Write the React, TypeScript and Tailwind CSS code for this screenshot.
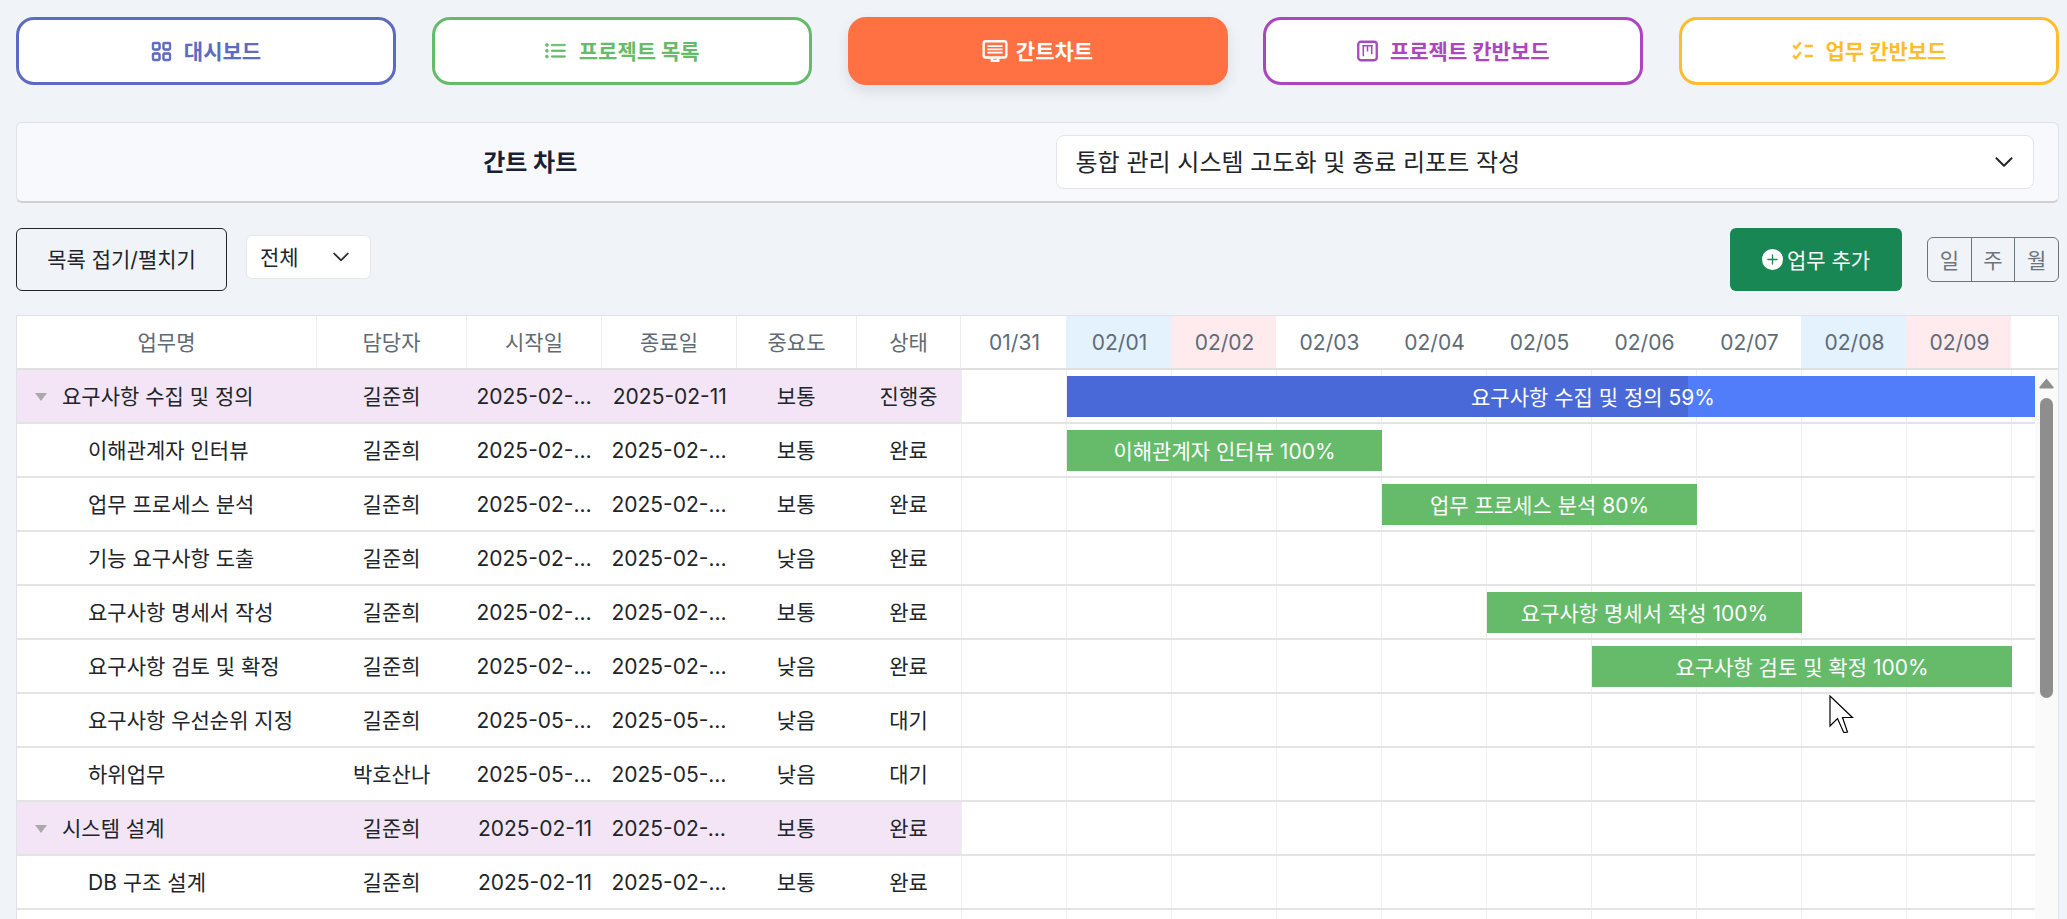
import { BsGrid, BsListUl, BsPlusCircleFill, BsChevronDown } from "react-icons/bs";
import type { ReactNode } from "react";

const DAYS = [
  { label: "01/31", bg: "" },
  { label: "02/01", bg: "bg-[#e3f2fd]" },
  { label: "02/02", bg: "bg-[#ffebee]" },
  { label: "02/03", bg: "" },
  { label: "02/04", bg: "" },
  { label: "02/05", bg: "" },
  { label: "02/06", bg: "" },
  { label: "02/07", bg: "" },
  { label: "02/08", bg: "bg-[#e3f2fd]" },
  { label: "02/09", bg: "bg-[#ffebee]" },
];

const DAY_W = 105;

type Row = {
  name: string;
  owner: string;
  start: string;
  end: string;
  priority: string;
  status: string;
  group?: boolean;
  bar?: { from: number; span: number; label: string };
};

const ROWS: Row[] = [
  { name: "요구사항 수집 및 정의", owner: "길준희", start: "2025-02-01", end: "2025-02-11", priority: "보통", status: "진행중", group: true },
  { name: "이해관계자 인터뷰", owner: "길준희", start: "2025-02-01", end: "2025-02-03", priority: "보통", status: "완료", bar: { from: 1, span: 3, label: "이해관계자 인터뷰 100%" } },
  { name: "업무 프로세스 분석", owner: "길준희", start: "2025-02-04", end: "2025-02-06", priority: "보통", status: "완료", bar: { from: 4, span: 3, label: "업무 프로세스 분석 80%" } },
  { name: "기능 요구사항 도출", owner: "길준희", start: "2025-02-03", end: "2025-02-05", priority: "낮음", status: "완료" },
  { name: "요구사항 명세서 작성", owner: "길준희", start: "2025-02-05", end: "2025-02-07", priority: "보통", status: "완료", bar: { from: 5, span: 3, label: "요구사항 명세서 작성 100%" } },
  { name: "요구사항 검토 및 확정", owner: "길준희", start: "2025-02-06", end: "2025-02-09", priority: "낮음", status: "완료", bar: { from: 6, span: 4, label: "요구사항 검토 및 확정 100%" } },
  { name: "요구사항 우선순위 지정", owner: "길준희", start: "2025-05-01", end: "2025-05-03", priority: "낮음", status: "대기" },
  { name: "하위업무", owner: "박호산나", start: "2025-05-02", end: "2025-05-04", priority: "낮음", status: "대기" },
  { name: "시스템 설계", owner: "길준희", start: "2025-02-11", end: "2025-02-20", priority: "보통", status: "완료", group: true },
  { name: "DB 구조 설계", owner: "길준희", start: "2025-02-11", end: "2025-02-14", priority: "보통", status: "완료" },
  { name: "", owner: "", start: "", end: "", priority: "", status: "" },
];

function GanttIcon() {
  return (
    <svg width="26" height="26" viewBox="0 0 24 24" fill="none" stroke="currentColor" strokeWidth="2.200">
      <rect x="1.500" y="3" width="21" height="15" rx="2" />
      <path d="M9 18.500v2.500h6v-2.500" />
      <path d="M5 7.500h14M5 10.500h14M5 13.500h14" strokeWidth="1.800" />
    </svg>
  );
}

function KanbanIcon() {
  return (
    <svg width="21" height="22" viewBox="0 0 20 20" fill="none" stroke="currentColor">
      <rect x="1.200" y="1.200" width="17.600" height="17.600" rx="2.500" strokeWidth="2.200" />
      <path d="M5 5h10M6 5v10M10 5v5.500M14 5v8" strokeWidth="1.500" />
    </svg>
  );
}

function TaskIcon() {
  return (
    <svg width="22" height="22" viewBox="0 0 20 20" fill="none" stroke="currentColor" strokeWidth="2.200">
      <path d="M1 5l2.500 2.500L8 2M1 14l2.500 2.500L8 11" />
      <path d="M11.500 5.500h7.500M11.500 14.500h7.500" />
    </svg>
  );
}

function NavButton({ icon, label, className }: { icon: ReactNode; label: string; className: string }) {
  return (
    <div className={`flex h-[68px] w-[380px] items-center justify-center rounded-[18px] text-[21px] font-bold ${className}`}>
      {icon}
      <span className="pt-[2px]">{label}</span>
    </div>
  );
}

export default function App() {
  return (
    <div className="h-[919px] overflow-hidden bg-[#f0f4f9] pl-4 pr-[8px] pt-[17px] font-[Inter,'Noto_Sans_CJK_KR',sans-serif] text-[#212529]">
      {/* top tabs */}
      <div className="flex justify-between">
        <NavButton icon={<BsGrid size={21} strokeWidth={0.8} />} label="대시보드" className="gap-3 border-[3px] border-[#5c6bc0] bg-white text-[#5c6bc0]" />
        <NavButton icon={<BsListUl size={23} strokeWidth={0.5} />} label="프로젝트 목록" className="gap-3 border-[3px] border-[#66bb6a] bg-white text-[#66bb6a]" />
        <NavButton icon={<GanttIcon />} label="간트차트" className="gap-2 bg-[#ff7043] text-white shadow-[0_6px_14px_rgba(0,0,0,0.1)]" />
        <NavButton icon={<KanbanIcon />} label="프로젝트 칸반보드" className="gap-3 border-[3px] border-[#ab47bc] bg-white text-[#ab47bc]" />
        <NavButton icon={<TaskIcon />} label="업무 칸반보드" className="gap-3 border-[3px] border-[#ffbd2e] bg-white text-[#ffbd2e]" />
      </div>

      {/* title bar */}
      <div className="mt-[37px] grid h-[81px] grid-cols-2 items-center gap-9 rounded-md border border-[#dee2e6] border-b-2 border-b-[#d0d0d0] bg-[#f8f9fc] px-6">
        <div className="pt-[2px] text-center text-[24px] font-bold text-[#1a1f36]">간트 차트</div>
        <div className="flex h-[54px] items-center justify-between rounded-lg border border-[#e2e6ea] bg-white px-[19px] text-[24px]">
          <span className="pt-[2px]">통합 관리 시스템 고도화 및 종료 리포트 작성</span>
          <BsChevronDown size={20} strokeWidth={0.8} />
        </div>
      </div>

      {/* toolbar */}
      <div className="mt-[25px] flex items-center text-[21px]">
        <button className="flex h-[63px] w-[211px] items-center justify-center rounded-md border border-[#212529]">목록 접기/펼치기</button>
        <div className="ml-[19px] mt-[7px] flex h-[44px] w-[125px] items-center justify-between self-start rounded-md border border-[#e5e7eb] bg-white pl-[13px] pr-[20px]">
          <span className="pt-[2px]">전체</span>
          <BsChevronDown size={18} strokeWidth={0.8} />
        </div>
        <button className="ml-auto flex h-[63px] w-[172px] items-center justify-center gap-1 rounded-md bg-[#198754] text-white">
          <BsPlusCircleFill size={21} />
          <span className="pt-[2px]">업무 추가</span>
        </button>
        <div className="ml-[25px] flex h-[45px] w-[132px] rounded-md border border-[#6c757d] pt-[2px] text-[#6c757d]">
          <div className="flex flex-1 items-center justify-center">일</div>
          <div className="-mt-[2px] flex flex-1 items-center justify-center border-x border-[#6c757d] pt-[2px]">주</div>
          <div className="flex flex-1 items-center justify-center">월</div>
        </div>
      </div>

      {/* gantt table */}
      <div className="mt-6 border border-[#dfe3e8] bg-white text-[21px]">
        <div className="flex h-[54px] border-b-2 border-[#e0e0e0] text-[#5f6b76]">
          <HeaderCell className="w-[300px]">업무명</HeaderCell>
          <HeaderCell className="w-[150px]">담당자</HeaderCell>
          <HeaderCell className="w-[135px]">시작일</HeaderCell>
          <HeaderCell className="w-[135px]">종료일</HeaderCell>
          <HeaderCell className="w-[120px]">중요도</HeaderCell>
          <HeaderCell className="w-[104px]">상태</HeaderCell>
          {DAYS.map((d) => (
            <div key={d.label} className={`flex w-[105px] items-center justify-center pl-[2px] pt-[2px] ${d.bg}`}>
              {d.label}
            </div>
          ))}
        </div>
        <div className="relative flex">
          <div className="w-[2018px] shrink-0">
            {ROWS.map((r, i) => (
              <GanttRow key={i} row={r} blue={i === 0} />
            ))}
          </div>
          {/* scrollbar */}
          <div className="flex h-[560px] flex-1 flex-col items-center bg-[#fafafa] pt-[8px]">
            <svg width="15" height="11" viewBox="0 0 15 11" className="text-[#8e8e8e]">
              <path d="M7.500 0.500L14.500 9a1 1 0 0 1-1 1.500h-12a1 1 0 0 1-1-1.500z" fill="currentColor" />
            </svg>
            <div className="mt-[9px] h-[300px] w-[13px] rounded-full bg-[#8e8e8e]" />
          </div>
          {/* mouse pointer in the capture */}
          <svg width="25" height="39" viewBox="0 0 25 39" className="absolute left-[1812px] top-[325px]">
            <path d="M1 1v30l7.500-7.500 6 13.500q1 1 4 0l-5-14.500h10z" fill="white" stroke="black" strokeWidth="1.200" />
          </svg>
        </div>
      </div>
    </div>
  );
}

function HeaderCell({ className, children }: { className: string; children: ReactNode }) {
  return <div className={`flex items-center justify-center border-r border-[#eceff1] pt-[2px] ${className}`}>{children}</div>;
}

function GanttRow({ row, blue }: { row: Row; blue: boolean }) {
  const bg = row.group ? "bg-[#f3e5f5]" : "";
  return (
    <div className="flex h-[54px] border-b-2 border-[#e4e4e4]">
      <div className={`flex w-[945px] shrink-0 items-center border-r border-[#eceff1] pt-[2px] ${bg}`}>
        <div className="flex w-[300px] items-center">
          {row.group ? (
            <>
              <span className="ml-[18px] h-0 w-0 border-x-[6.500px] border-t-[8px] border-x-transparent border-t-[#aaaaaa]" />
              <span className="ml-[15px]">{row.name}</span>
            </>
          ) : (
            <span className="ml-[71px]">{row.name}</span>
          )}
        </div>
        <div className="w-[150px] text-center">{row.owner}</div>
        <div className="w-[135px] truncate pl-[10px] pr-[8px] text-center">{row.start}</div>
        <div className="w-[135px] truncate pl-[10px] pr-[8px] text-center">{row.end}</div>
        <div className="w-[120px] text-center">{row.priority}</div>
        <div className="w-[105px] text-center">{row.status}</div>
      </div>
      <div className="relative flex flex-1 overflow-hidden">
        {DAYS.map((d) => (
          <div key={d.label} className="w-[105px] shrink-0 border-r border-[#eeeeee]" />
        ))}
        {blue && (
          <div className="absolute left-[105px] top-[6px] flex h-[41px] w-[1052px] items-center justify-center bg-[#527dfa] pt-[2px] text-white">
            <div className="absolute inset-y-0 left-0 w-[59%] bg-[#4a69d8]" />
            <span className="relative">{row.name} 59%</span>
          </div>
        )}
        {row.bar && (
          <div
            className="absolute top-[6px] flex h-[41px] items-center justify-center bg-[#66bb6a] pt-[2px] text-white"
            style={{ left: row.bar.from * DAY_W, width: row.bar.span * DAY_W }}
          >
            {row.bar.label}
          </div>
        )}
      </div>
    </div>
  );
}
